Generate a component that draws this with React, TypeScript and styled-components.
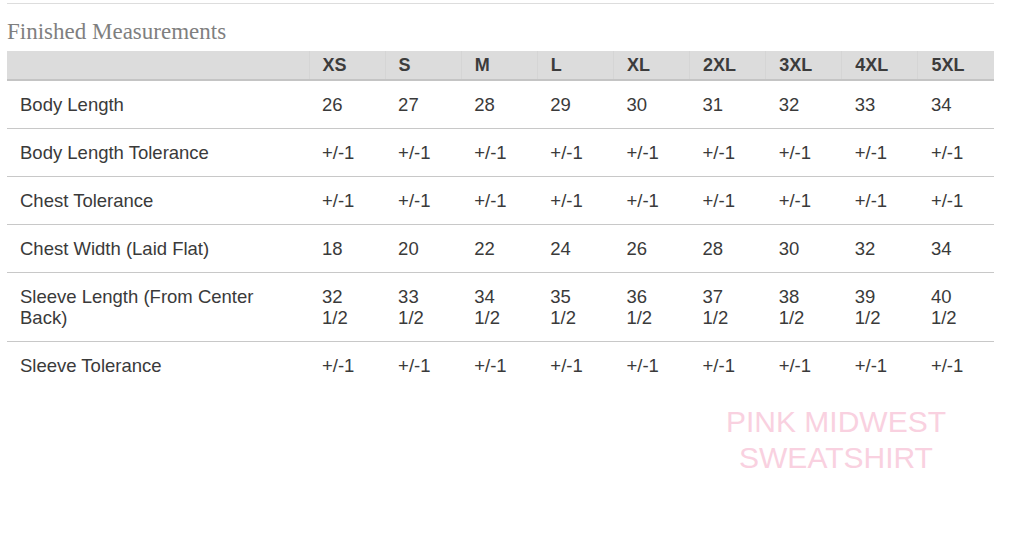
import styled, { createGlobalStyle } from 'styled-components';

const GlobalStyle = createGlobalStyle`
  body {
    margin: 0;
    background: #ffffff;
  }
`;

const Page = styled.div`
  padding: 3px 30px 0 7px;
  font-family: 'Liberation Sans', Arial, sans-serif;
  color: #333333;
`;

const TopRule = styled.hr`
  margin: 0;
  border: 0;
  border-top: 1px solid #dddddd;
`;

const Title = styled.h2`
  margin: 14px 0 0;
  font-family: 'Liberation Serif', 'Times New Roman', serif;
  font-weight: normal;
  font-size: 23px;
  line-height: 27px;
  color: #7f7f7f;
`;

const Table = styled.table`
  width: 100%;
  margin-top: 6px;
  border-collapse: collapse;
  table-layout: fixed;
  font-size: 18.5px;
  line-height: 21px;
`;

const LabelCol = styled.col`
  width: 302px;
`;

const HeadRow = styled.tr`
  background: #dcdcdc;
  border-bottom: 2px solid #c4c4c4;
`;

const HeadCell = styled.th<{ $label?: boolean }>`
  padding: 4px 12px 3px 13px;
  text-align: left;
  font-weight: bold;
  font-size: 18px;
  color: #3c3c3c;
  border-left: ${(p) => (p.$label ? '0' : '1px solid #d5d5d5')};
`;

const Row = styled.tr<{ $last?: boolean }>`
  border-bottom: ${(p) => (p.$last ? '0' : '1px solid #c8c8c8')};
`;

const Cell = styled.td`
  padding: 13px 12px 13px 13px;
  vertical-align: top;
  color: #3a3a3a;
`;

const Note = styled.div`
  margin: 15px 0 0 693px;
  width: 272px;
  text-align: center;
  font-size: 30px;
  line-height: 36px;
  color: #f9d1e0;
`;

const sizes = ['XS', 'S', 'M', 'L', 'XL', '2XL', '3XL', '4XL', '5XL'];

const tol = sizes.map(() => '+/-1');

const rows: { label: string; values: string[] }[] = [
  { label: 'Body Length', values: ['26', '27', '28', '29', '30', '31', '32', '33', '34'] },
  { label: 'Body Length Tolerance', values: tol },
  { label: 'Chest Tolerance', values: tol },
  { label: 'Chest Width (Laid Flat)', values: ['18', '20', '22', '24', '26', '28', '30', '32', '34'] },
  {
    label: 'Sleeve Length (From Center Back)',
    values: ['32 1/2', '33 1/2', '34 1/2', '35 1/2', '36 1/2', '37 1/2', '38 1/2', '39 1/2', '40 1/2'],
  },
  { label: 'Sleeve Tolerance', values: tol },
];

export default function App() {
  return (
    <>
      <GlobalStyle />
      <Page>
        <TopRule />
        <Title>Finished Measurements</Title>
        <Table>
          <colgroup>
            <LabelCol />
            {sizes.map((s) => (
              <col key={s} />
            ))}
          </colgroup>
          <thead>
            <HeadRow>
              <HeadCell $label />
              {sizes.map((s) => (
                <HeadCell key={s}>{s}</HeadCell>
              ))}
            </HeadRow>
          </thead>
          <tbody>
            {rows.map((r, i) => (
              <Row key={r.label} $last={i === rows.length - 1}>
                <Cell>{r.label}</Cell>
                {r.values.map((v, j) => (
                  <Cell key={j}>{v}</Cell>
                ))}
              </Row>
            ))}
          </tbody>
        </Table>
        <Note>
          PINK MIDWEST
          <br />
          SWEATSHIRT
        </Note>
      </Page>
    </>
  );
}
